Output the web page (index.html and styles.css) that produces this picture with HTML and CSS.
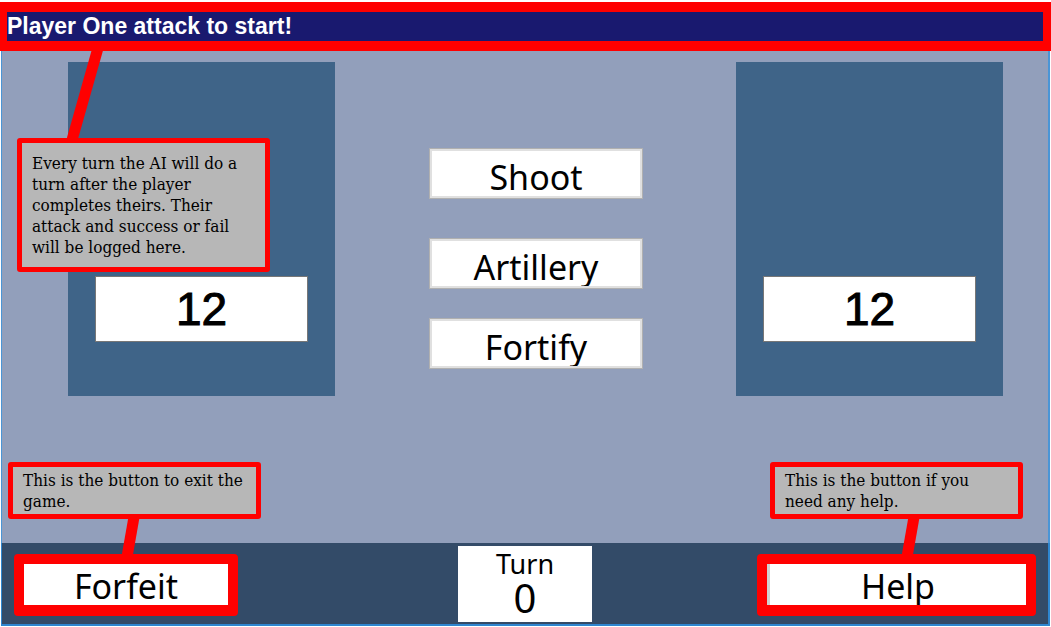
FILE: index.html
```html
<!DOCTYPE html>
<html lang="en">
<head>
<meta charset="utf-8">
<meta name="viewport" content="width=device-width, initial-scale=1">
<title>Battle</title>
<link rel="stylesheet" href="styles.css">
</head>
<body>
<div class="game">
  <header class="log">
    <p class="log-text">Player One attack to start!</p>
    <svg class="pointer pointer-log" width="40" height="92" viewBox="0 0 40 92" aria-hidden="true"><path d="M31 0 5 92" stroke="#f00" stroke-width="11"/></svg>
    <p class="note note-log">Every turn the AI will do a turn after the player completes theirs. Their attack and success or fail will be logged here.</p>
  </header>
  <main class="field">
    <section class="player" aria-label="Player one">
      <output class="score">12</output>
    </section>
    <div class="actions">
      <button class="action action-first" type="button">Shoot</button>
      <button class="action" type="button">Artillery</button>
      <button class="action" type="button">Fortify</button>
    </div>
    <section class="player player-two" aria-label="Player two">
      <output class="score">12</output>
    </section>
  </main>
  <footer class="bar">
    <div class="framed">
      <button class="command" type="button">Forfeit</button>
      <svg class="pointer pointer-forfeit" width="28" height="40" viewBox="0 0 28 40" aria-hidden="true"><path d="M20 0 13 40" stroke="#f00" stroke-width="11"/></svg>
      <p class="note note-forfeit">This is the button to exit the game.</p>
    </div>
    <div class="turn">
      <span class="turn-label">Turn</span>
      <span class="turn-count">0</span>
    </div>
    <div class="framed framed-help">
      <button class="command command-help" type="button">Help</button>
      <svg class="pointer pointer-help" width="28" height="40" viewBox="0 0 28 40" aria-hidden="true"><path d="M20 0 13 40" stroke="#f00" stroke-width="11"/></svg>
      <p class="note note-help">This is the button if you need any help.</p>
    </div>
  </footer>
</div>
</body>
</html>
```
FILE: styles.css
```css
* { box-sizing: border-box; }

body {
  margin: 0;
  background: #fff;
  color: #000;
  font-family: "Noto Sans", "Open Sans", sans-serif;
}

p { margin: 0; }

.game {
  display: flex;
  flex-direction: column;
  min-height: 100vh;
  padding: 2px 0 1px;
}

.log {
  position: relative;
  z-index: 1;
  border: 10px solid #f00;
  border-width: 10px 8px 10px 7px;
  background: #19196f;
}

.log-text {
  color: #fff;
  font: bold 23px/29px "Liberation Sans", Arial, sans-serif;
}

.field {
  flex: 1;
  display: grid;
  grid-template-columns: 267fr 94fr 214fr 93fr 267fr;
  align-items: start;
  padding: 11px 45px 0 66px;
  margin: 0 1px;
  border: 2px solid #4a95d6;
  border-width: 0 2px 0 1px;
  background: #929fbb;
}

.player {
  padding: 214px 27px 54px;
  background: #3f6488;
}

.player-two { grid-column: 5; }

.score {
  display: block;
  border: 1px solid #777;
  background: #fff;
  text-align: center;
  font: 46px/64px "Liberation Sans", Arial, sans-serif;
  -webkit-text-stroke: 1px #000;
}

.actions {
  grid-column: 3;
  display: grid;
  gap: 29px;
  padding-top: 86px;
}

.action-first { margin-bottom: 10px; }

.action,
.command {
  display: block;
  width: 100%;
  overflow: hidden;
  background: #fff;
  color: #000;
  text-align: center;
  font: 34px/40px "Noto Sans", "Open Sans", sans-serif;
}

.action {
  height: 51px;
  padding: 6px 0 0;
  border: 3px solid #e0e0e0;
  outline: 1px solid #b0b0b0;
  outline-offset: -1px;
}

.bar {
  display: grid;
  grid-template-columns: 224fr 220fr 134fr 165fr 279fr;
  align-items: start;
  margin: 0 1px;
  padding: 3px 12px 2px;
  border: 2px solid #2e86d0;
  border-width: 0 2px 2px 1px;
  background: #334b68;
}

.framed {
  position: relative;
  margin-top: 8px;
  border: 10px solid #f00;
  border-bottom-width: 11px;
  border-radius: 4px;
  background: #f00;
}

.command {
  height: 41px;
  padding: 2px 0 0;
  border: 0;
}

.command-help { border-left: 3px solid #d0d0d0; }

.turn {
  grid-column: 3;
  display: grid;
  align-content: start;
  height: 76px;
  background: #fff;
  text-align: center;
}

.turn-label { font-size: 27px; line-height: 36px; }
.turn-count { font-size: 40px; line-height: 32px; }

.framed-help { grid-column: 5; }

.note {
  position: absolute;
  width: 253px;
  border: 5px solid #f00;
  border-radius: 3px;
  background: #b7b7b7;
  padding: 3px 10px 2px;
  font: 17px/21px "DejaVu Serif Condensed", "DejaVu Serif", serif;
}

.note-log {
  top: 126px;
  left: 10px;
  padding: 10px 10px 9px;
}

.note-forfeit { bottom: 86px; left: -16px; }
.note-help { bottom: 86px; left: 3px; padding-right: 20px; }

.pointer { position: absolute; }
.pointer-log { top: 36px; left: 60px; }
.pointer-forfeit { bottom: 48px; left: 90px; }
.pointer-help { bottom: 48px; left: 127px; }
```
